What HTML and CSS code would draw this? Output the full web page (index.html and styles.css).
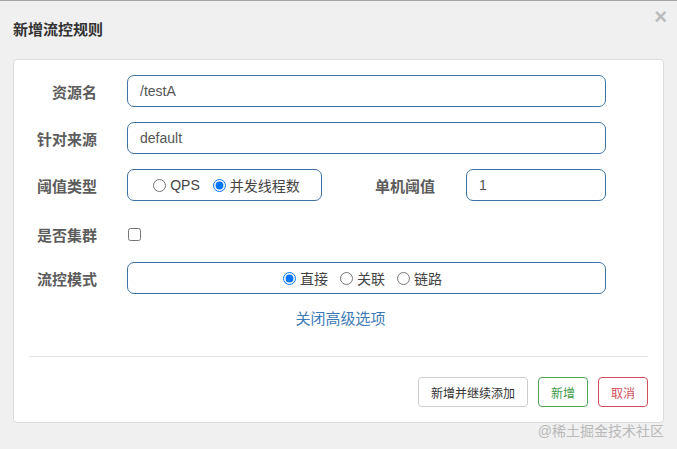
FILE: index.html
```html
<!DOCTYPE html>
<html lang="zh-CN">
<head>
<meta charset="utf-8">
<title>新增流控规则</title>
<link rel="stylesheet" href="styles.css">
</head>
<body>
<div class="dialog">
  <div class="header">
    <h4 class="title">新增流控规则</h4>
    <span class="close">×</span>
  </div>
  <div class="panel">
    <div class="row">
      <label class="lbl">资源名</label>
      <div class="field grow"><span class="val">/testA</span></div>
    </div>
    <div class="row">
      <label class="lbl">针对来源</label>
      <div class="field grow"><span class="val">default</span></div>
    </div>
    <div class="row">
      <label class="lbl">阈值类型</label>
      <div class="field group">
        <label class="opt"><input type="radio" name="grade">QPS</label>
        <label class="opt"><input type="radio" name="grade" checked>并发线程数</label>
      </div>
      <label class="lbl lbl2">单机阈值</label>
      <div class="field grow"><span class="val">1</span></div>
    </div>
    <div class="row row-check">
      <label class="lbl">是否集群</label>
      <input class="check" type="checkbox">
    </div>
    <div class="row">
      <label class="lbl">流控模式</label>
      <div class="field grow group mode">
        <label class="opt"><input type="radio" name="mode" checked>直接</label>
        <label class="opt"><input type="radio" name="mode">关联</label>
        <label class="opt"><input type="radio" name="mode">链路</label>
      </div>
    </div>
    <div class="link-row"><a class="link">关闭高级选项</a></div>
    <div class="divider"></div>
    <div class="footer">
      <button class="btn">新增并继续添加</button>
      <button class="btn btn-ok">新增</button>
      <button class="btn btn-cancel">取消</button>
    </div>
  </div>
  <div class="watermark">@稀土掘金技术社区</div>
</div>
</body>
</html>
```
FILE: styles.css
```css
* { box-sizing: border-box; }
html, body {
  margin: 0;
  padding: 0;
  background: #f0f0f0;
  font-family: "Liberation Sans", "Noto Sans CJK SC", sans-serif;
}
.dialog {
  position: relative;
  width: 677px;
  height: 449px;
  border-top: 1px solid #a6a6a6;
  background: #f0f0f0;
}
.header {
  height: 58px;
  display: flex;
  align-items: center;
  padding: 0 13px 4px;
  justify-content: space-between;
}
.title {
  margin: 0;
  font-size: 15px;
  font-weight: bold;
  color: #333;
}
.close {
  position: absolute;
  right: 10px;
  top: 4px;
  font-size: 22px;
  font-weight: bold;
  color: #bcbcbc;
  line-height: 24px;
}
.panel {
  margin: 0 13px 0 13px;
  background: #fff;
  border: 1px solid #dcdcdc;
  border-radius: 4px;
  padding: 15px 15px 15px 15px;
}
.row {
  display: flex;
  align-items: center;
  height: 32px;
  margin-bottom: 15px;
  padding-right: 42px;
}
.row-check { height: 31px; padding-top: 6px; }
.lbl {
  width: 68px;
  flex: none;
  text-align: right;
  font-size: 15px;
  font-weight: bold;
  color: #5c5c5c;
  margin-right: 30px;
}
.lbl2 { width: 113px; margin-right: 31px; }
.field {
  height: 32px;
  border: 1px solid #3f72a2;
  border-radius: 7px;
  display: flex;
  align-items: center;
  padding: 0 12px;
  font-size: 14px;
  color: #555;
}
.grow { flex: 1; }
.group {
  justify-content: center;
  gap: 13px;
  color: #444;
}
.mode { gap: 12px; padding-right: 20px; }
.row > .group:not(.grow) { width: 195px; flex: none; padding-left: 16px; }
.opt {
  display: flex;
  align-items: center;
  font-size: 14px;
}
.opt input {
  width: 13px;
  height: 13px;
  margin: 0 4px 0 0;
}
.check {
  width: 13px;
  height: 13px;
  margin: 0 0 0 1px;
}
.link-row {
  text-align: center;
  margin-top: 5px;
  line-height: 20px;
  padding-left: 4px;
}
.link {
  font-size: 15px;
  color: #3d7ab6;
}
.divider {
  height: 1px;
  background: #e5e5e5;
  margin-top: 27px;
}
.footer {
  display: flex;
  justify-content: flex-end;
  gap: 10px;
  margin-top: 20px;
}
.btn {
  height: 30px;
  padding: 0 12px;
  font-family: "Liberation Sans", "Noto Sans CJK SC", sans-serif;
  font-size: 12px;
  background: #fff;
  border: 1px solid #ccc;
  border-radius: 4px;
  color: #333;
}
.btn-ok { border-color: #4aa556; color: #3e9a47; }
.btn-cancel { border-color: #d04d5a; color: #d04d5a; }
.watermark {
  position: absolute;
  right: 13px;
  top: 419px;
  font-size: 14px;
  color: #b9b9b9;
}
```
